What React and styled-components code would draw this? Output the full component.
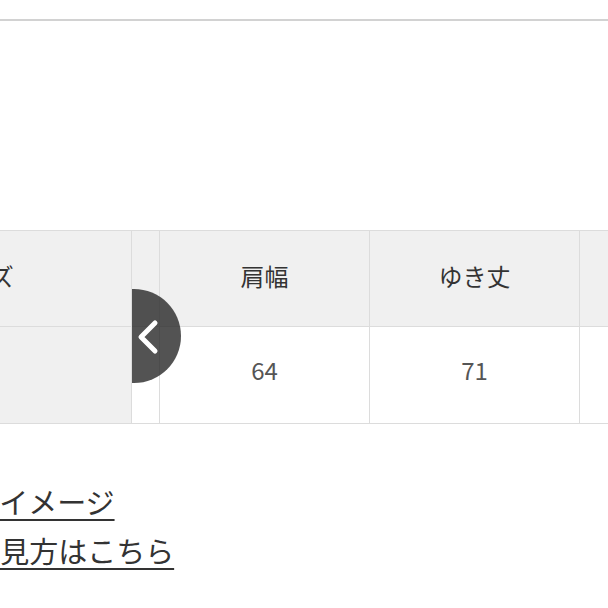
import React from 'react';
import styled, { createGlobalStyle } from 'styled-components';

const GlobalStyle = createGlobalStyle`
  html, body {
    margin: 0;
    padding: 0;
    background: #fff;
  }
  body {
    font-family: "Noto Sans CJK JP", "Noto Sans", sans-serif;
    color: #333;
  }
`;

const Page = styled.div`
  width: 608px;
  height: 608px;
  overflow: hidden;
  background: #fff;
`;

const TopRule = styled.div`
  height: 2px;
  margin-top: 19px;
  background: #d2d2d2;
`;

const TableWrap = styled.div`
  display: flex;
  margin-top: 209px;
  margin-left: -175px;
  border-top: 1px solid #dcdcdc;
  border-bottom: 1px solid #dcdcdc;
`;

const FixedCol = styled.div`
  position: relative;
  z-index: 2;
  flex: 0 0 307px;
  display: flex;
  flex-direction: column;
  background: #f0f0f0;
  border-right: 1px solid #dcdcdc;
  box-sizing: border-box;
`;

const ScrollPart = styled.div`
  position: relative;
  flex: 1;
  display: flex;
  overflow: hidden;
`;

const Column = styled.div`
  flex: 0 0 ${props => props.width}px;
  display: flex;
  flex-direction: column;
  border-right: 1px solid #dcdcdc;
  box-sizing: border-box;
`;

const Cell = styled.div`
  height: 96px;
  display: flex;
  align-items: center;
  justify-content: center;
  box-sizing: border-box;
  font-size: 24px;
  padding-bottom: ${props => props.head ? 6 : 12}px;
  color: ${props => props.head ? '#333' : '#555'};
  background: ${props => props.head ? '#f0f0f0' : 'transparent'};
  border-bottom: ${props => props.head ? '1px solid #dcdcdc' : 'none'};
`;

const PrevButton = styled.div`
  position: absolute;
  left: -45px;
  top: 58px;
  width: 94px;
  height: 94px;
  border-radius: 50%;
  background: rgba(40, 40, 40, 0.8);
  z-index: 1;
`;

const Links = styled.div`
  display: flex;
  flex-direction: column;
  gap: 9px;
  margin-top: 57px;
`;

const TextLink = styled.a`
  display: block;
  margin-left: ${props => props.shift}px;
  font-size: 29px;
  line-height: 40px;
  color: #333;
  text-decoration: underline;
  text-decoration-thickness: 2px;
  text-underline-offset: 5px;
  white-space: nowrap;
`;

const columns = [
  { w: 28, head: '', value: '' },
  { w: 210, head: '肩幅', value: '64' },
  { w: 210, head: 'ゆき丈', value: '71' },
  { w: 210, head: '着丈', value: '68' },
];

export default function App() {
  return (
    <Page>
      <GlobalStyle />
      <TopRule />
      <TableWrap>
        <FixedCol>
          <Cell head>サイズ</Cell>
          <Cell>&nbsp;</Cell>
        </FixedCol>
        <ScrollPart>
          <PrevButton>
            <svg width="94" height="94" viewBox="0 0 94 94">
              <path d="M68 34 L54 48 L68 62" fill="none" stroke="#fff" strokeWidth="5" strokeLinecap="round" strokeLinejoin="round" />
            </svg>
          </PrevButton>
          {columns.map((c, i) => (
            <Column key={i} width={c.w}>
              <Cell head>{c.head}</Cell>
              <Cell>{c.value}</Cell>
            </Column>
          ))}
        </ScrollPart>
      </TableWrap>
      <Links>
        <TextLink shift={-87}>サイズイメージ</TextLink>
        <TextLink shift={-115}>サイズの見方はこちら</TextLink>
      </Links>
    </Page>
  );
}
